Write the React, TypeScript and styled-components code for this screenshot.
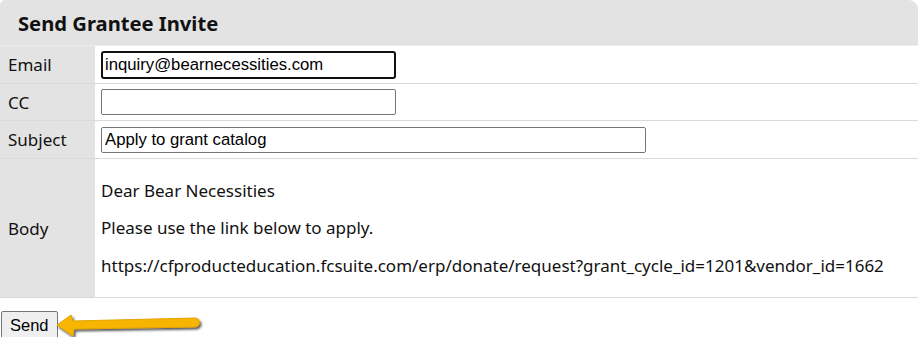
import React from 'react';
import styled, { createGlobalStyle } from 'styled-components';

const GlobalStyle = createGlobalStyle`
body {
    margin: 0;
    background: #ffffff;
    font-family: "Noto Sans", "Open Sans", sans-serif;
    color: #111111;
}
`;

const Page = styled.div`
width: 918px;
`;

const Header = styled.div`
height: 45px;
background-color: #e3e3e3;
border-radius: 5px 9px 0 0;
border-bottom: 1px solid #ececec;
display: flex;
align-items: center;
padding-left: 18px;
font-size: 20.2px;
font-weight: bold;
color: #111111;
`;

const FormGrid = styled.div`
display: grid;
grid-template-columns: 95px 1fr;
`;

interface RowProps {
    height: number;
}

const Label = styled.div<RowProps>`
height: ${p => p.height}px;
background-color: #e3e3e3;
border-bottom: 1px solid #dadada;
display: flex;
align-items: center;
padding-left: 8px;
font-size: 17px;
`;

const Field = styled.div<RowProps>`
height: ${p => p.height}px;
border-bottom: 1px solid #dadada;
display: flex;
align-items: center;
padding-left: 6px;
`;

interface InputProps {
    wide?: boolean;
    focused?: boolean;
}

const TextInput = styled.input<InputProps>`
box-sizing: border-box;
width: ${p => p.wide ? 545 : 295}px;
height: ${p => p.focused ? 28 : 26}px;
border: ${p => p.focused ? '2px solid #111111' : '1px solid #767676'};
border-radius: ${p => p.focused ? 3 : 2}px;
padding: 0 ${p => p.focused ? 2 : 3}px;
font-family: "Liberation Sans", Arial, sans-serif;
font-size: 16.7px;
color: #000000;
background: #ffffff;
outline: none;
`;

const BodyCell = styled.div`
border-bottom: 1px solid #dadada;
padding: 5px 6px 6px;
font-size: 17px;
line-height: 23px;

p {
    margin: 14.5px 0;
}
`;

const BodyLabel = styled(Label)`
height: auto;
`;

const Footer = styled.div`
display: flex;
align-items: flex-start;
padding: 13px 0 0 1px;
`;

const SendButton = styled.button`
height: 28px;
padding: 0 8px;
background-color: #efefef;
border: 1px solid #767676;
border-radius: 2px;
font-family: "Liberation Sans", Arial, sans-serif;
font-size: 16.5px;
color: #000000;
`;

const Arrow = styled.svg`
margin: -1px 0 0 -4px;
`;

const rows = [
    { label: 'Email', height: 37, value: 'inquiry@bearnecessities.com', focused: true },
    { label: 'CC', height: 36, value: '' },
    { label: 'Subject', height: 37, value: 'Apply to grant catalog', wide: true },
];

const App: React.FC = () => (
    <>
        <GlobalStyle />
        <Page>
            <Header>Send Grantee Invite</Header>
            <FormGrid>
                {rows.map(row => (
                    <React.Fragment key={row.label}>
                        <Label height={row.height}>{row.label}</Label>
                        <Field height={row.height}>
                            <TextInput
                                readOnly
                                value={row.value}
                                focused={row.focused}
                                wide={row.wide}
                            />
                        </Field>
                    </React.Fragment>
                ))}
                <BodyLabel height={0}>Body</BodyLabel>
                <BodyCell>
                    <p>Dear Bear Necessities</p>
                    <p>Please use the link below to apply.</p>
                    <p>https://cfproducteducation.fcsuite.com/erp/donate/request?grant_cycle_id=1201&amp;vendor_id=1662</p>
                </BodyCell>
            </FormGrid>
            <Footer>
                <SendButton>Send</SendButton>
                <Arrow width="152" height="32" viewBox="0 0 152 32">
                    <defs>
                        <filter id="arrowShadow" x="-10%" y="-30%" width="120%" height="180%">
                            <feDropShadow dx="1.5" dy="2" stdDeviation="1.2" floodColor="#222" floodOpacity="0.75" />
                        </filter>
                    </defs>
                    <path
                        d="M3 15 L17 5 L19 11 L141 8 A4.5 4.5 0 0 1 141 17 L20 19 L19 26 Z"
                        fill="#f7b500"
                        stroke="#e5a500"
                        strokeWidth="1"
                        strokeLinejoin="round"
                        filter="url(#arrowShadow)"
                    />
                </Arrow>
            </Footer>
        </Page>
    </>
);

export default App;
